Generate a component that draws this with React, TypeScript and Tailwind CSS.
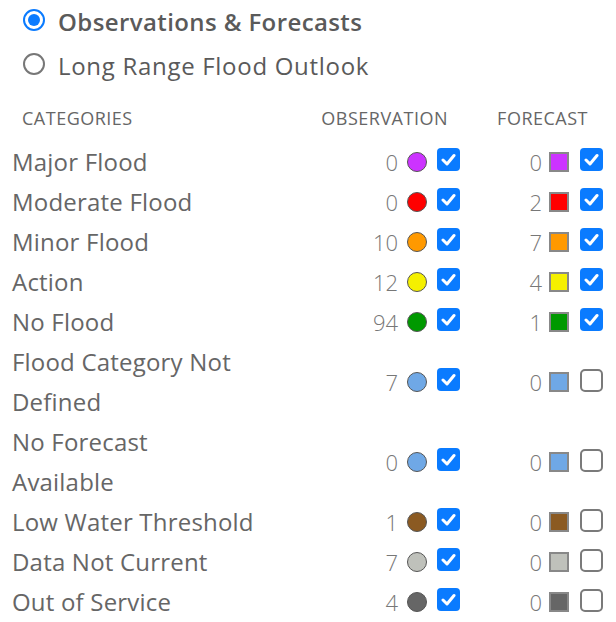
type Row = {
  label: string[];
  obs: number;
  obsOn: boolean;
  fc: number;
  fcOn: boolean;
  color: string;
};

const rows: Row[] = [
  { label: ["Major Flood"], obs: 0, obsOn: true, fc: 0, fcOn: true, color: "#cc33ff" },
  { label: ["Moderate Flood"], obs: 0, obsOn: true, fc: 2, fcOn: true, color: "#ff0000" },
  { label: ["Minor Flood"], obs: 10, obsOn: true, fc: 7, fcOn: true, color: "#ff9900" },
  { label: ["Action"], obs: 12, obsOn: true, fc: 4, fcOn: true, color: "#f5f000" },
  { label: ["No Flood"], obs: 94, obsOn: true, fc: 1, fcOn: true, color: "#009900" },
  { label: ["Flood Category Not", "Defined"], obs: 7, obsOn: true, fc: 0, fcOn: false, color: "#6fa8e6" },
  { label: ["No Forecast", "Available"], obs: 0, obsOn: true, fc: 0, fcOn: false, color: "#6fa8e6" },
  { label: ["Low Water Threshold"], obs: 1, obsOn: true, fc: 0, fcOn: false, color: "#8b5a22" },
  { label: ["Data Not Current"], obs: 7, obsOn: true, fc: 0, fcOn: false, color: "#bfc1bb" },
  { label: ["Out of Service"], obs: 4, obsOn: true, fc: 0, fcOn: false, color: "#666666" },
];

function Check({ on }: { on: boolean }) {
  if (!on) {
    return (
      <span className="mb-[4px] block h-[23px] w-[23px] rounded-[5px] border-2 border-[#7a7a7a] bg-white" />
    );
  }
  return (
    <span className="mb-[6px] flex h-[23px] w-[23px] items-center justify-center rounded-[4px] bg-[#0a7bff]">
      <svg width="15" height="13" viewBox="0 0 15 13" fill="none">
        <path d="M2 7 L6 11 L13 2.5" stroke="white" strokeWidth="3" strokeLinecap="round" strokeLinejoin="round" />
      </svg>
    </span>
  );
}

function Radio({ on, label }: { on: boolean; label: string }) {
  return (
    <div className="flex h-[44px] items-center gap-[13px] pl-[23px] leading-none">
      <span
        className={
          on
            ? "mb-[4px] flex h-[22px] w-[22px] items-center justify-center rounded-full border-2 border-[#0a7bff]"
            : "mb-[4px] block h-[22px] w-[22px] rounded-full border-2 border-[#777]"
        }
      >
        {on && <span className="block h-[12px] w-[12px] rounded-full bg-[#0a7bff]" />}
      </span>
      <span
        className={
          on
            ? "text-[24px] font-semibold tracking-[0.4px] text-[#5a5a5a]"
            : "text-[24px] tracking-[0.7px] text-[#5a5a5a]"
        }
      >
        {label}
      </span>
    </div>
  );
}

export default function App() {
  return (
    <div className="h-[622px] w-[616px] bg-white font-['Open_Sans','Liberation_Sans',sans-serif] text-[#666]">
      <Radio on label="Observations & Forecasts" />
      <Radio on={false} label="Long Range Flood Outlook" />

      <div className="mt-[10px] flex h-[40px] items-center pl-[12px] text-[18px] uppercase tracking-[0.5px] text-[#666]">
        <div className="w-[258px] pl-[10px]">Categories</div>
        <div className="w-[190px] pr-[12px] text-right">Observation</div>
        <div className="w-[143px] pr-[15px] text-right">Forecast</div>
      </div>

      <div className="mt-[4px] pl-[12px]">
        {rows.map((r) => (
          <div key={r.label.join(" ")} className="flex items-center">
            <div className="w-[258px] text-[24px] leading-[40px] tracking-[0.2px] text-[#666]">
              {r.label.map((line) => (
                <div key={line}>{line}</div>
              ))}
            </div>
            <div className="flex w-[190px] items-center justify-end">
              <span className="text-[22px] font-light text-[#777]">{r.obs}</span>
              <span
                className="ml-[9px] block h-[20px] w-[20px] rounded-full border border-[#555]"
                style={{ backgroundColor: r.color }}
              />
              <span className="ml-[10px]">
                <Check on={r.obsOn} />
              </span>
            </div>
            <div className="flex w-[143px] items-center justify-end">
              <span className="text-[22px] font-light text-[#777]">{r.fc}</span>
              <span
                className="ml-[7px] block h-[20px] w-[20px] border-2 border-[#888]"
                style={{ backgroundColor: r.color }}
              />
              <span className="ml-[11px]">
                <Check on={r.fcOn} />
              </span>
            </div>
          </div>
        ))}
      </div>
    </div>
  );
}
